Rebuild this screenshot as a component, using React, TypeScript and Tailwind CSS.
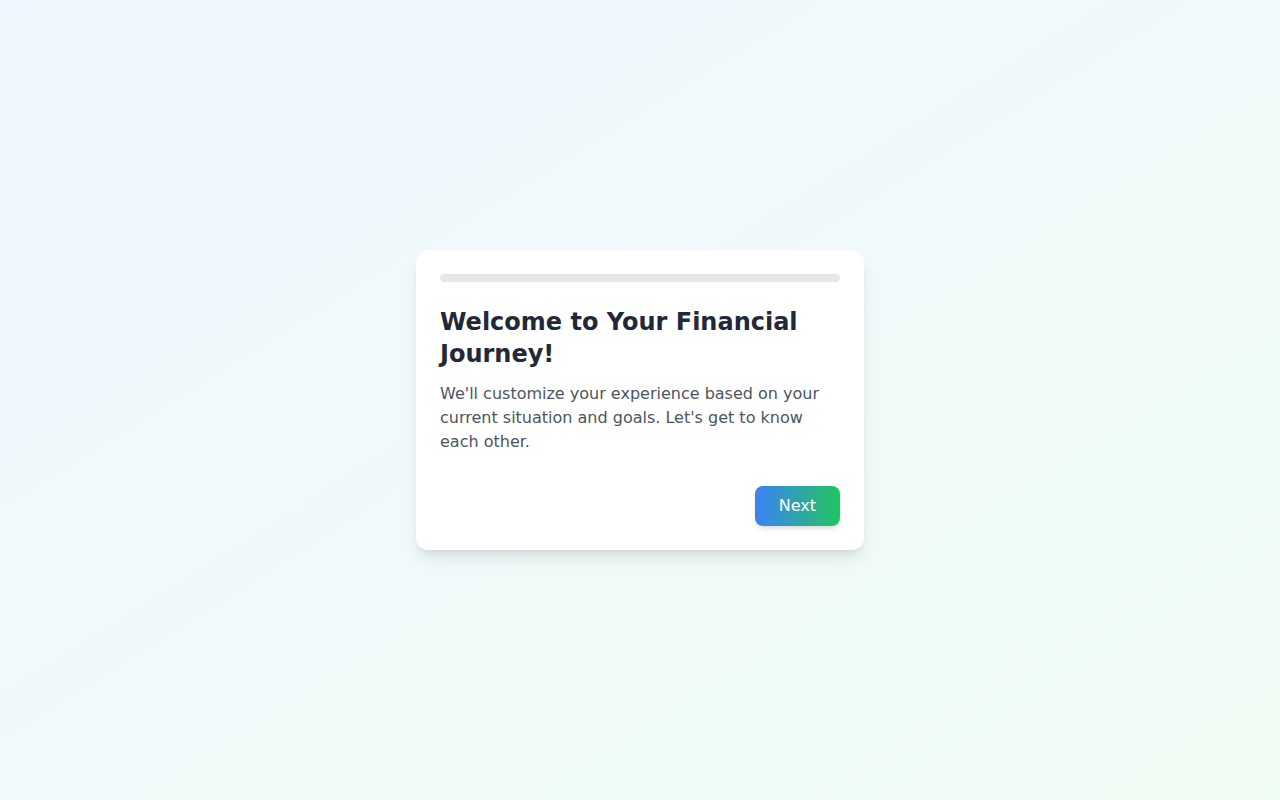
export default function App() {
  return (
    <div
      className="min-h-screen flex items-center justify-center bg-linear-to-br/srgb from-[#eff6ff] to-[#f0fdf4] p-4"
      style={{ fontFamily: '"DejaVu Sans", sans-serif' }}
    >
      <div className="w-full max-w-md bg-white rounded-xl shadow-lg p-6">
        <div className="h-2 w-full bg-[#e5e7eb] rounded-full mb-6" />
        <h1 className="text-2xl font-bold text-[#1f2937] mb-3">Welcome to Your Financial Journey!</h1>
        <p className="text-base text-[#4b5563]">
          We'll customize your experience based on your current situation and goals. Let's get to know each other.
        </p>
        <div className="flex justify-end mt-8">
          <button className="px-6 py-2 rounded-lg text-white font-normal bg-linear-to-r/srgb from-[#3b82f6] to-[#22c55e] shadow-md">
            Next
          </button>
        </div>
      </div>
    </div>
  );
}
